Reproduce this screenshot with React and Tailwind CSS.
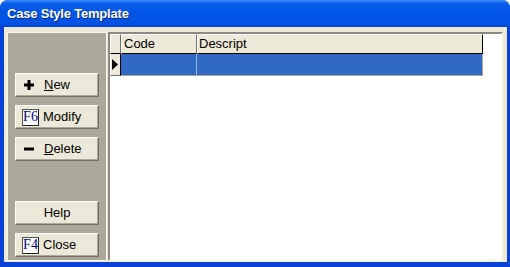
import React from 'react';

const btnClass =
  'h-[24px] w-[84px] flex items-center bg-[#ECE9D8] border border-t-white border-l-white border-r-[#716F64] border-b-[#716F64] shadow-[inset_-1px_-1px_0_#ACA899] text-[13px] text-black';

const FKey = ({ label }) => (
  <span className="w-[17px] h-[17px] flex items-center justify-center bg-white border border-[#55534a] border-r-[#222] border-b-[#222] text-[#000080] text-[14px] leading-none font-['Liberation_Serif',serif]">
    {label}
  </span>
);

const App = () => {
  return (
    <div className="w-[510px] h-[267px] bg-[#0842d6] rounded-t-[8px] flex flex-col overflow-hidden font-['Liberation_Sans',Arial,sans-serif]">
      {/* title bar */}
      <div className="h-[27px] flex items-center px-[7px] pt-[1px] bg-[linear-gradient(#3d8dfb_0%,#0a60ec_12%,#0055e5_45%,#0052e3_85%,#0046d2_100%)]">
        <span className="text-white font-bold text-[13px] tracking-[-0.2px] [text-shadow:1px_1px_0_#0a2a8a]">
          Case Style Template
        </span>
      </div>

      {/* body */}
      <div className="flex-1 ml-[4px] mr-[3px] mb-[5px] bg-[#ECE9D8] flex pl-[3px] pr-[4px] pt-[5px] pb-[1px] gap-[1px]">
        {/* left button panel */}
        <div className="w-[100px] border border-[#F7F6F1] bg-[#ACA899] flex flex-col px-[7px] pt-[40px] pb-[3px]">
          <div className="flex flex-col gap-[8px]">
            <button className={`${btnClass} pl-[8px]`}>
              <svg width="10" height="10" viewBox="0 0 10 10" className="mr-[10px]">
                <rect x="3.5" y="0" width="3" height="10" fill="#000" />
                <rect x="0" y="3.5" width="10" height="3" fill="#000" />
              </svg>
              <span>
                <span className="underline">N</span>ew
              </span>
            </button>
            <button className={`${btnClass} pl-[6px]`}>
              <FKey label="F6" />
              <span className="ml-[4px]">Modify</span>
            </button>
            <button className={`${btnClass} pl-[8px]`}>
              <svg width="10" height="10" viewBox="0 0 10 10" className="mr-[10px]">
                <rect x="0" y="3.5" width="10" height="3" fill="#000" />
              </svg>
              <span>
                <span className="underline">D</span>elete
              </span>
            </button>
          </div>
          <div className="flex flex-col gap-[8px] mt-[40px]">
            <button className={`${btnClass} justify-center`}>Help</button>
            <button className={`${btnClass} pl-[6px]`}>
              <FKey label="F4" />
              <span className="ml-[4px]">Close</span>
            </button>
          </div>
        </div>

        {/* grid */}
        <div className="flex-1 bg-white border-2 border-t-[#8c8a80] border-l-[#8c8a80] border-r-[#F7F6F1] border-b-[#F7F6F1]">
          {/* header */}
          <div className="flex h-[20px] text-[13px] text-black">
            <div className="w-[11px] bg-[#ECE9D8] border-t border-l border-t-white border-l-white border-r border-r-[#716F64] border-b border-b-black" />
            <div className="w-[76px] bg-[#ECE9D8] border-t border-l border-t-white border-l-white border-r border-r-[#716F64] border-b border-b-black pl-[2px] leading-[18px]">
              Code
            </div>
            <div className="w-[286px] bg-[#ECE9D8] border-t border-l border-t-white border-l-white border-r border-r-black border-b border-b-black pl-[1px] leading-[18px]">
              Descript
            </div>
          </div>
          {/* data row */}
          <div className="flex h-[22px]">
            <div className="w-[11px] bg-[#ECE9D8] border-l border-l-white border-r border-r-black border-b border-b-[#716F64] flex items-center pl-[1px]">
              <svg width="6" height="11" viewBox="0 0 6 11">
                <path d="M0 0 L6 5.5 L0 11 Z" fill="#000" />
              </svg>
            </div>
            <div className="w-[76px] bg-[#316AC5] border-r border-r-[#9db4dc] border-b border-b-[#ACA899]" />
            <div className="w-[286px] bg-[#316AC5] border-r border-r-[#ACA899] border-b border-b-[#ACA899]" />
          </div>
        </div>
      </div>
    </div>
  );
};

export default App;
